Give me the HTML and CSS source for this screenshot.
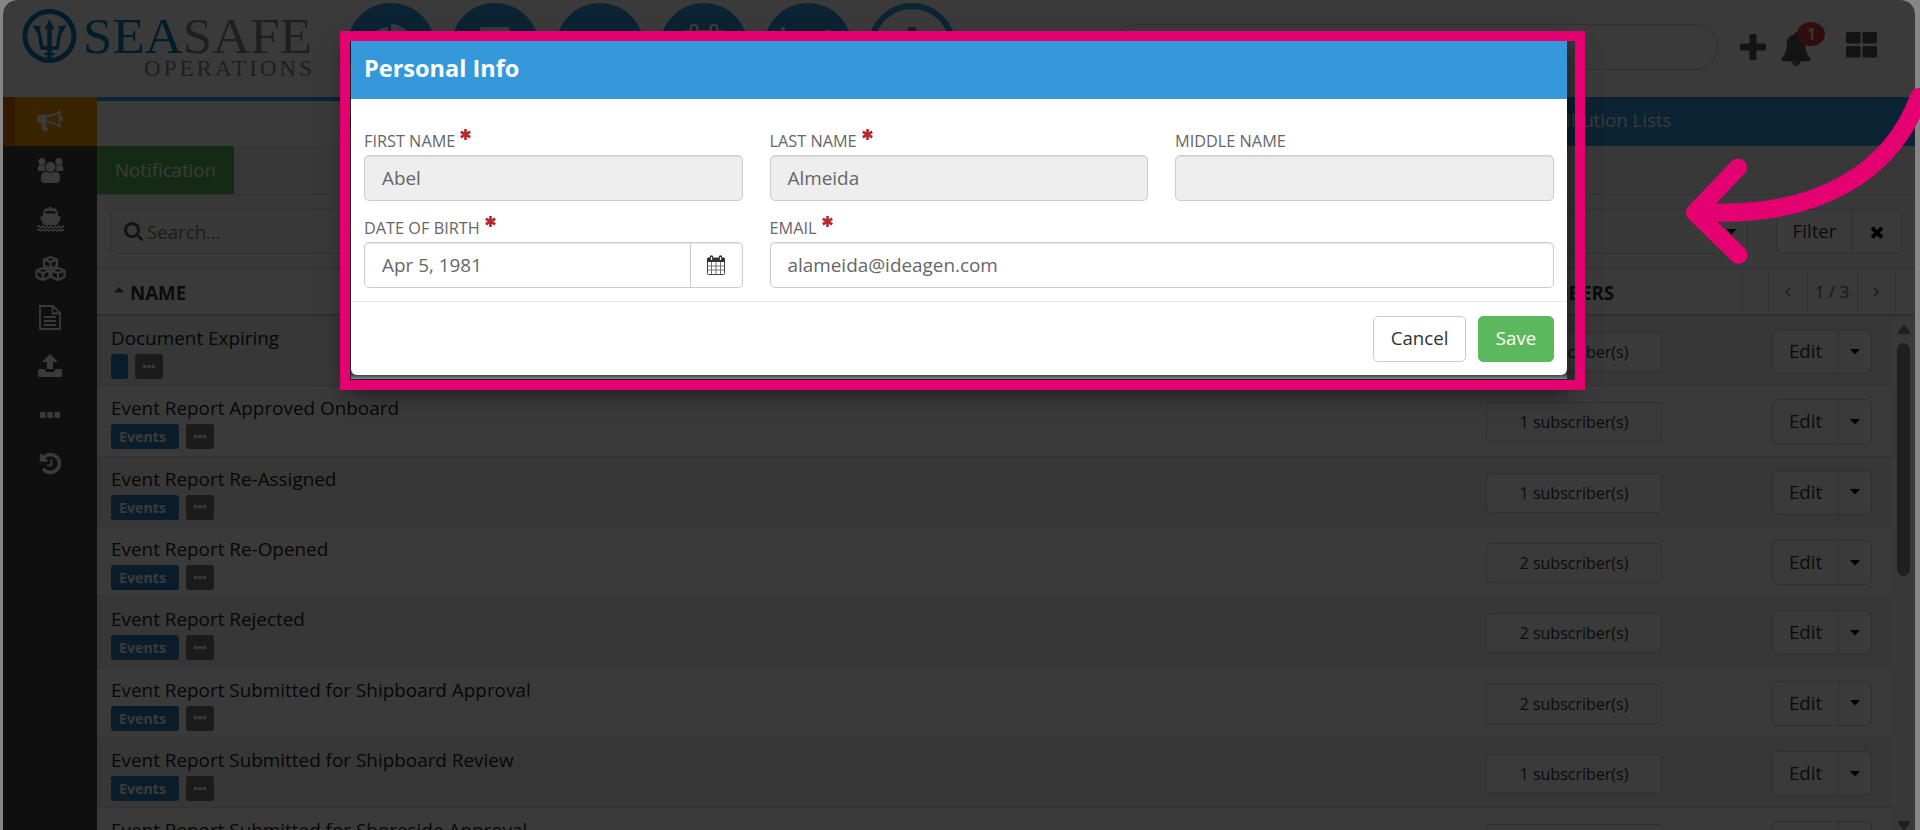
FILE: index.html
```
<!DOCTYPE html>
<html lang="en">
<head>
    <meta charset="UTF-8">
    <title>SeaSafe Operations</title>
    <link rel="stylesheet" href="styles.css">
</head>
<body>

    <svg class="defs" width="0" height="0">
        <symbol id="i-caret" viewBox="0 0 10 6"><path d="M0 0h10L5 5.6z"/></symbol>
        <symbol id="i-dots" viewBox="0 0 20 6"><rect x="0" y="0" width="5.6" height="6" rx="1"/><rect x="7.2" y="0" width="5.6" height="6" rx="1"/><rect x="14.4" y="0" width="5.6" height="6" rx="1"/></symbol>
        <symbol id="i-star" viewBox="0 0 10 10"><path d="M5 0v10M.700 2.500l8.600 5M9.300 2.500l-8.600 5" stroke="#b52b2b" stroke-width="2.400"/></symbol>
    </svg>

    <div class="app">
        <header class="topbar">
            <svg class="logo" width="312" height="97" viewBox="0 0 312 97">
                <g fill="none" stroke="#0a7fb8">
                    <circle cx="46.500" cy="36" r="24.500" stroke-width="5"/>
                    <path d="M46.500 26v34" stroke-width="4.500"/>
                    <path d="M34 28c4 7 3 14 5 20h15c2-6 1-13 5-20" stroke-width="3.500"/>
                    <path d="M41 54h11" stroke-width="2"/>
                </g>
                <path d="M46.500 19l5 10h-10zM29.500 25l9 1.500-5 6zM63.500 25l-9 1.500 5 6z" fill="#0a7fb8"/>
                <text class="logo-text" x="80" y="53" font-size="51" textLength="229" lengthAdjust="spacingAndGlyphs"><tspan fill="#0a7fb8">SEA</tspan><tspan fill="#8a8a8a">SAFE</tspan></text>
                <text class="logo-text" x="141" y="75.500" font-size="23" fill="#8a8a8a" textLength="168">OPERATIONS</text>
            </svg>
            <nav class="circles">
                <span class="circle"><svg width="46" height="46" viewBox="0 0 46 46"><path d="M20 3A20 20 0 1 0 40 26H20zM23 0v22h22A22 22 0 0 0 23 0z"/></svg></span>
                <span class="circle"><svg width="30" height="40" viewBox="0 0 30 40"><rect width="30" height="40" rx="3"/></svg></span>
                <span class="circle"><svg width="41" height="33" viewBox="0 0 41 33"><rect width="41" height="33" rx="3"/></svg></span>
                <span class="circle"><svg width="42" height="46" viewBox="0 0 42 46"><path d="M2 6h38v40H2z"/><path d="M11 4v6M31 4v6" stroke="#fff" stroke-width="9" stroke-linecap="round"/><path d="M11 4v6M31 4v6" stroke="#3498db" stroke-width="4" stroke-linecap="round"/></svg></span>
                <span class="circle"><svg width="54" height="40" viewBox="0 0 54 40"><path d="M2 0v38h52M9 30l9-10 8 6 20-18" fill="none" stroke="#fff" stroke-width="3.500"/><circle cx="46.500" cy="7.500" r="5"/></svg></span>
                <span class="circle outline"><svg width="40" height="40" viewBox="0 0 40 40"><path d="M16 1q0-1 1-1h6q1 0 1 1v15h16v8H24v16h-8V24H0v-8h16z"/></svg></span>
            </nav>
            <div class="global-search"></div>
            <div class="actions">
                <svg width="26" height="26" viewBox="0 0 26 26"><path d="M9.500 1.500q0-1.500 1.500-1.500h4q1.500 0 1.500 1.500v8h8q1.500 0 1.500 1.500v4q0 1.500-1.500 1.500h-8v8q0 1.500-1.500 1.500h-4q-1.500 0-1.500-1.500v-8h-8Q0 16.500 0 15v-4q0-1.500 1.500-1.500h8z"/></svg>
                <span class="bell">
                    <svg width="32" height="34" viewBox="0 0 1792 1792" preserveAspectRatio="none"><path d="M912 1696q0-16-16-16-59 0-101.500-42.500t-42.500-101.500q0-16-16-16t-16 16q0 73 51.500 124.500t124.500 51.500q16 0 16-16zm816-288q0 52-38 90t-90 38h-448q0 106-75 181t-181 75-181-75-75-181h-448q-52 0-90-38t-38-90q50-42 91-88t85-119.500 74.500-158.500 50-206 19.500-260q0-152 117-282.500t307-158.500q-8-19-8-39 0-40 28-68t68-28 68 28 28 68q0 20-8 39 190 28 307 158.500t117 282.500q0 139 19.500 260t50 206 74.500 158.500 85 119.500 91 88z"/></svg>
                    <span class="badge">1</span>
                </span>
                <svg width="31" height="26" viewBox="0 0 31 26"><rect width="14.500" height="11.500" rx="1.500"/><rect x="16.500" width="14.500" height="11.500" rx="1.500"/><rect y="14" width="14.500" height="11.500" rx="1.500"/><rect x="16.500" y="14" width="14.500" height="11.500" rx="1.500"/></svg>
            </div>
        </header>

        <div class="page">
            <aside class="sidebar">
                <a class="active"><svg width="26" height="22" viewBox="0 0 26 22"><path d="M2 5h8v8H9q0 4 3 6-2 3-6 1.500Q4 17 4.500 13H2q-2 0-2-2V7q0-2 2-2z"/><path d="M10.500 6Q17 5.500 22.500 1.500v15Q17 12.500 10.500 12" fill="none" stroke="#fff" stroke-width="2"/><path d="M23 6.500q3 .5 3 2.500t-3 2.500z"/></svg></a>
                <a><svg width="27" height="25" viewBox="0 0 27 25"><circle cx="5" cy="3.500" r="3.500"/><circle cx="22" cy="3.500" r="3.500"/><path d="M1 13q-1-6 2-6 3 1 5 0-1 3 0 6zM26 13q1-6-2-6-3 1-5 0 1 3 0 6z"/><circle cx="13.500" cy="9" r="5"/><path d="M4 22q-1-8 5-8.500 4.500 2.500 9 0 6 .5 5 8.500-.5 3-4 3H8q-3.500 0-4-3z"/></svg></a>
                <a><svg width="27" height="25" viewBox="0 0 27 25"><path d="M12 0h3v1.500h4l2 4.500v3l3 1q-1 4-4 8H7Q4 14 3 10l3-1V6l2-4.500h4zM9 4L8 6.500h11L18 4z"/><path d="M0 20l2-1 2 2 2-2 2 2 2-2 2 2 2-2 2 2 2-2 2 2 2-2 2 2 2-2 1 1M0 23.500l2-1 2 1.500 2-1.500 2 1.500 2-1.500 2 1.500 2-1.500 2 1.500 2-1.500 2 1.500 2-1.500 2 1.500 2-1.500 1 1" fill="none" stroke="#fff" stroke-width="1.500"/></svg></a>
                <a><svg width="31" height="25" viewBox="0 0 31 25"><g fill="none" stroke="#fff" stroke-width="2.200" stroke-linejoin="round"><path d="M9 3.500L15.500 1 22 3.500v6.500l-6.500 2.500L9 10zM9 3.500L15.500 6 22 3.500M15.500 6v6"/><path d="M1.500 14.500L8 12l6.500 2.500V21L8 24l-6.500-3zM1.500 14.500L8 17l6.500-2.500M8 17v6"/><path d="M16.500 14.500L23 12l6.500 2.500V21L23 24l-6.500-3zM16.500 14.500L23 17l6.500-2.500M23 17v6"/></g></svg></a>
                <a><svg width="22" height="25" viewBox="0 0 22 25"><path d="M1 1h13l7 7v16H1zM13.500 1v7.500H21M5 12h12M5 16h12M5 20h12" fill="none" stroke="#fff" stroke-width="1.800"/></svg></a>
                <a><svg width="24" height="23" viewBox="0 0 24 23"><path d="M12 0l8 8h-5v7H9V8H4zM1.500 15H7q0 3 2 3h6q2 0 2-3h5.500q1.500 0 1.500 1.500v5q0 1.500-1.500 1.500h-21Q0 23 0 21.500v-5Q0 15 1.500 15z"/></svg></a>
                <a><svg width="20" height="6"><use href="#i-dots"/></svg></a>
                <a><svg width="25" height="25" viewBox="0 0 1792 1792"><path d="M1664 896q0 156-61 298t-164 245-245 164-298 61q-172 0-327-72.500t-264-204.500q-7-10-6.500-22.500t8.500-20.500l137-138q10-9 25-9 16 2 23 12 73 95 179 147t225 52q104 0 198.500-40.500t163.500-109.500 109.500-163.500 40.500-198.500-40.500-198.500-109.500-163.500-163.500-109.500-198.500-40.500q-98 0-188 35.500t-160 101.500l137 138q31 30 14 69-17 40-59 40h-448q-26 0-45-19t-19-45v-448q0-42 40-59 39-17 69 14l130 129q107-101 244.500-156.500t284.500-55.500q156 0 298 61t245 164 164 245 61 298zm-640-288v448q0 14-9 23t-23 9h-320q-14 0-23-9t-9-23v-64q0-14 9-23t23-9h224v-352q0-14 9-23t23-9h64q14 0 23 9t9 23z"/></svg></a>
            </aside>

            <main class="content">
                <div class="tabs">
                    <a class="tab current">Notifications</a>
                    <a class="tab"></a>
                    <a class="tab last">Distribution Lists</a>
                </div>
                <div class="subtabs"><a>Notification</a></div>

                <div class="toolbar">
                    <div class="search">
                        <svg width="19" height="19" viewBox="0 0 1664 1664"><path d="M1152 704q0-185-131.500-316.500t-316.500-131.500-316.500 131.500-131.500 316.500 131.500 316.500 316.500 131.500 316.500-131.500 131.500-316.500zm512 832q0 52-38 90t-90 38q-54 0-90-38l-343-342q-179 124-399 124-143 0-273.500-55.500t-225-150-150-225-55.500-273.500 55.500-273.500 150-225 225-150 273.500-55.500 273.500 55.500 225 150 150 225 55.500 273.500q0 220-124 399l343 343q37 37 37 90z"/></svg>
                        Search...
                    </div>
                    <div class="select"><svg width="11" height="6"><use href="#i-caret"/></svg></div>
                    <div class="group filter">
                        <span>Filter</span>
                        <span class="clear"><svg width="18" height="18" viewBox="0 0 1792 1792"><path d="M1490 1322q0 40-28 68l-136 136q-28 28-68 28t-68-28l-294-294-294 294q-28 28-68 28t-68-28l-136-136q-28-28-28-68t28-68l294-294-294-294q-28-28-28-68t28-68l136-136q28-28 68-28t68 28l294 294 294-294q28-28 68-28t68 28l136 136q28 28 28 68t-28 68l-294 294 294 294q28 28 28 68z"/></svg></span>
                    </div>
                </div>

                <div class="thead">
                    <div class="name"><svg width="10" height="6" viewBox="0 0 10 6"><path d="M0 5.600h10L5 0z"/></svg> NAME</div>
                    <div class="subs">SUBSCRIBERS</div>
                    <div class="pager">
                        <span><svg width="7" height="10" viewBox="0 0 7 10"><path d="M6 1L2 5l4 4"/></svg></span>
                        <span class="count">1 / 3</span>
                        <span class="next"><svg width="7" height="10" viewBox="0 0 7 10"><path d="M1 1l4 4-4 4"/></svg></span>
                    </div>
                </div>

                <div class="list">
                    <div class="rows">
                        <div class="row">
                            <div class="name">Document Expiring<div class="tags"><b class="tag"></b><b class="tag more"><svg width="12" height="3.600"><use href="#i-dots"/></svg></b></div></div>
                            <div class="subs"><span>1 subscriber(s)</span></div>
                            <div class="group"><span>Edit</span><span class="drop"><svg width="10" height="6"><use href="#i-caret"/></svg></span></div>
                        </div>
                        <div class="row">
                            <div class="name">Event Report Approved Onboard<div class="tags"><b class="tag">Events</b><b class="tag more"><svg width="12" height="3.600"><use href="#i-dots"/></svg></b></div></div>
                            <div class="subs"><span>1 subscriber(s)</span></div>
                            <div class="group"><span>Edit</span><span class="drop"><svg width="10" height="6"><use href="#i-caret"/></svg></span></div>
                        </div>
                        <div class="row">
                            <div class="name">Event Report Re-Assigned<div class="tags"><b class="tag">Events</b><b class="tag more"><svg width="12" height="3.600"><use href="#i-dots"/></svg></b></div></div>
                            <div class="subs"><span>1 subscriber(s)</span></div>
                            <div class="group"><span>Edit</span><span class="drop"><svg width="10" height="6"><use href="#i-caret"/></svg></span></div>
                        </div>
                        <div class="row">
                            <div class="name">Event Report Re-Opened<div class="tags"><b class="tag">Events</b><b class="tag more"><svg width="12" height="3.600"><use href="#i-dots"/></svg></b></div></div>
                            <div class="subs"><span>2 subscriber(s)</span></div>
                            <div class="group"><span>Edit</span><span class="drop"><svg width="10" height="6"><use href="#i-caret"/></svg></span></div>
                        </div>
                        <div class="row">
                            <div class="name">Event Report Rejected<div class="tags"><b class="tag">Events</b><b class="tag more"><svg width="12" height="3.600"><use href="#i-dots"/></svg></b></div></div>
                            <div class="subs"><span>2 subscriber(s)</span></div>
                            <div class="group"><span>Edit</span><span class="drop"><svg width="10" height="6"><use href="#i-caret"/></svg></span></div>
                        </div>
                        <div class="row">
                            <div class="name">Event Report Submitted for Shipboard Approval<div class="tags"><b class="tag">Events</b><b class="tag more"><svg width="12" height="3.600"><use href="#i-dots"/></svg></b></div></div>
                            <div class="subs"><span>2 subscriber(s)</span></div>
                            <div class="group"><span>Edit</span><span class="drop"><svg width="10" height="6"><use href="#i-caret"/></svg></span></div>
                        </div>
                        <div class="row">
                            <div class="name">Event Report Submitted for Shipboard Review<div class="tags"><b class="tag">Events</b><b class="tag more"><svg width="12" height="3.600"><use href="#i-dots"/></svg></b></div></div>
                            <div class="subs"><span>1 subscriber(s)</span></div>
                            <div class="group"><span>Edit</span><span class="drop"><svg width="10" height="6"><use href="#i-caret"/></svg></span></div>
                        </div>
                        <div class="row">
                            <div class="name">Event Report Submitted for Shoreside Approval</div>
                            <div class="subs"><span></span></div>
                            <div class="group"><span></span><span class="drop"></span></div>
                        </div>
                    </div>
                    <div class="scrollbar">
                        <svg width="12" height="9" viewBox="0 0 12 9"><path d="M6 0q1 0 1.500 1L12 7.500q0 1.500-1 1.500H1Q0 9 0 7.500L4.500 1Q5 0 6 0z"/></svg>
                        <div class="thumb"></div>
                        <svg width="12" height="9" viewBox="0 0 12 9"><path d="M6 9q1 0 1.500-1L12 1.500Q12 0 11 0H1Q0 0 0 1.500L4.500 8q.5 1 1.500 1z"/></svg>
                    </div>
                </div>
            </main>
        </div>
        <div class="backdrop"></div>
    </div>

    <div class="highlight">
        <div class="modal">
            <h4>Personal Info</h4>
            <form class="fields">
                <div class="field">
                    <label>FIRST NAME <svg width="11" height="11"><use href="#i-star"/></svg></label>
                    <div class="input disabled">Abel</div>
                </div>
                <div class="field">
                    <label>LAST NAME <svg width="11" height="11"><use href="#i-star"/></svg></label>
                    <div class="input disabled">Almeida</div>
                </div>
                <div class="field">
                    <label>MIDDLE NAME</label>
                    <div class="input disabled"></div>
                </div>
                <div class="field">
                    <label>DATE OF BIRTH <svg width="11" height="11"><use href="#i-star"/></svg></label>
                    <div class="input date">
                        Apr 5, 1981
                        <span class="addon"><svg width="18" height="20" viewBox="0 0 18 20"><rect x=".5" y="3" width="17" height="16.500" rx="1" fill="#fff" stroke="#444"/><path d="M0 3h18v4H0z" fill="#333"/><path d="M4.500 7v12M9 7v12M13.500 7v12M1 11h16M1 15h16" stroke="#666" stroke-width=".9"/><path d="M4.500 2v3M13.500 2v3" stroke="#333" stroke-width="3.500" stroke-linecap="round"/><path d="M4.500 2v3M13.500 2v3" stroke="#fff" stroke-width="1.200"/></svg></span>
                    </div>
                </div>
                <div class="field wide">
                    <label>EMAIL <svg width="11" height="11"><use href="#i-star"/></svg></label>
                    <div class="input">alameida@ideagen.com</div>
                </div>
            </form>
            <div class="footer">
                <a class="btn">Cancel</a>
                <a class="btn save">Save</a>
            </div>
        </div>
    </div>

    <svg class="pointer" width="250" height="200" viewBox="1670 80 250 200">
        <path d="M1919 97C1893 168 1822 220 1696 212M1738 167.500L1695 212.500 1738.500 255"/>
    </svg>

</body>
</html>
```

FILE: styles.css
```
* {
    box-sizing: border-box;
}

body {
    margin: 0;
    height: 830px;
    overflow: hidden;
    position: relative;
    background: #868686;
    color: #333;
    font-family: "Open Sans", "Noto Sans", sans-serif;
    font-size: 18.67px;
}

svg {
    display: block;
    flex: none;
}

.defs {
    position: absolute;
}

.app {
    position: relative;
    height: 830px;
    margin: 0 5px 0 3px;
    border-radius: 14px 14px 0 0;
    overflow: hidden;
    background: #fff;
}

.backdrop {
    position: absolute;
    inset: 0;
    background: rgba(0, 0, 0, 0.773);
}

/* top bar */
.topbar {
    display: flex;
    height: 97px;
}

.logo-text {
    font-family: "Liberation Serif", serif;
}

.circles {
    display: flex;
    gap: 16.3px;
    margin: 3px 0 0 32px;
}

.circle {
    width: 88px;
    height: 88px;
    border-radius: 50%;
    background: #3498db;
    fill: #fff;
    display: flex;
    align-items: center;
    justify-content: center;
}

.circle.outline {
    background: none;
    border: 6px solid #3498db;
    fill: #3498db;
}

.global-search {
    width: 604px;
    height: 46px;
    margin: 24px 0 0 158px;
    border: 1px solid #ccc;
    border-radius: 23px;
}

.actions {
    display: flex;
    align-items: flex-start;
    margin: 32px 0 0 22px;
    gap: 14px;
    fill: #555;
}

.actions > svg:first-child {
    margin-top: 2px;
}

.bell {
    position: relative;
    margin-right: 20px;
}

.badge {
    position: absolute;
    left: 17px;
    top: -10px;
    width: 28px;
    height: 24px;
    border-radius: 50%;
    background: #d43f3a;
    color: #fff;
    font-size: 16px;
    font-weight: 600;
    line-height: 24px;
    text-align: center;
}

.page {
    display: flex;
    height: 733px;
}

/* sidebar */
.sidebar {
    width: 94px;
    background: #444;
    fill: #fff;
}

.sidebar a {
    height: 48.9px;
    display: flex;
    align-items: center;
    justify-content: center;
}

.sidebar .active {
    background: #f8a000;
    border-left: 12px solid #e07000;
    padding-right: 12px;
}

.content {
    flex: 1;
}

.tabs {
    display: grid;
    grid-template-columns: repeat(3, 1fr);
    height: 49px;
    background: #3498db;
}

.tab {
    color: #fff;
    line-height: 46px;
    text-align: center;
}

.tab.current {
    background: #fff;
    color: #333;
    border-top: 4px solid #3498db;
    line-height: 42px;
    padding-right: 12px;
}

.tab.last {
    padding-right: 28px;
}

.subtabs {
    height: 49px;
    background: #f5f5f5;
    border-bottom: 1px solid #ddd;
}

.subtabs a {
    display: inline-block;
    width: 137px;
    height: 48px;
    background: #5cb85c;
    color: #fff;
    line-height: 48px;
    text-align: center;
}

/* toolbar */
.toolbar {
    display: flex;
    height: 74px;
    padding: 14px 13px 0 14px;
    background: #fafafa;
    border-bottom: 1px solid #ccc;
}

.search,
.select {
    height: 45px;
    border: 1px solid #ccc;
    border-radius: 5px;
    display: flex;
    align-items: center;
}

.search {
    width: 900px;
    padding-left: 12px;
    gap: 4px;
    color: #777;
    fill: #555;
}

.select {
    flex: 1;
    margin-left: 15px;
    justify-content: flex-end;
    padding-right: 10px;
}

.group {
    display: flex;
    width: 100px;
    height: 45px;
    border: 1px solid #ccc;
    border-radius: 6px;
    background: #fff;
    line-height: 41px;
    text-align: center;
}

.group > span {
    flex: 1;
}

.group .drop,
.group .clear {
    flex: none;
    width: 33px;
    border-left: 1px solid #ccc;
    display: flex;
    align-items: center;
    justify-content: center;
}

.group.filter {
    width: 126px;
    margin-left: 28px;
}

.group .clear {
    width: 49px;
}

/* table */
.thead {
    display: flex;
    height: 47px;
    border-bottom: 2px solid #ccc;
    font-weight: 700;
    line-height: 48px;
}

.thead .name {
    width: 1394px;
    padding-left: 17px;
    display: flex;
    gap: 6px;
}

.thead .name svg {
    margin-top: 18px;
    fill: #555;
}

.thead .subs {
    width: 252px;
    border-right: 1px solid #eee;
}

.pager {
    display: flex;
    width: 128px;
    height: 38px;
    margin: 4px 0 0 25px;
    border: solid #ddd;
    border-width: 0 1px;
    font-size: 17px;
    font-weight: 400;
    line-height: 36px;
    color: #666;
}

.pager span {
    flex: 1;
    display: flex;
    align-items: center;
    justify-content: center;
}

.pager svg {
    fill: none;
    stroke: #888;
    stroke-width: 1.5;
}

.pager .next svg {
    stroke: #337ab7;
}

.pager .count {
    flex: none;
    width: 51px;
    border: solid #ddd;
    border-width: 0 1px;
}

.list {
    display: flex;
    height: 514px;
}

.rows {
    flex: 1;
    overflow: hidden;
}

.row {
    display: flex;
    height: 70.35px;
    border-bottom: 1px solid #ddd;
}

.row:nth-child(odd) {
    background: #efefef;
}

.row .name {
    width: 1389px;
    padding: 9px 0 0 14px;
    color: #222;
    font-size: 18.9px;
    line-height: 26px;
}

.tags {
    display: flex;
    gap: 7px;
    margin-top: 3px;
}

.tag {
    min-width: 17px;
    height: 25px;
    padding: 0 8px;
    border-radius: 3px;
    background: #337ab7;
    color: #fff;
    font-size: 14.2px;
    line-height: 25px;
}

.tag:not(:empty):not(.more) {
    width: 68px;
    padding-right: 0;
}

.tag.more {
    background: #777;
    fill: #fff;
    display: flex;
    align-items: center;
}

.row .subs {
    width: 286px;
    padding-top: 16px;
}

.row .subs span {
    display: block;
    width: 176px;
    height: 40px;
    border: 1px solid #ccc;
    border-radius: 4px;
    background: #fff;
    font-size: 16px;
    line-height: 38px;
    text-align: center;
}

.row .group {
    margin-top: 13px;
}

.scrollbar {
    width: 23px;
    padding-top: 9px;
    background: #fafafa;
    fill: #888;
    display: flex;
    flex-direction: column;
    align-items: center;
}

.thumb {
    width: 13px;
    height: 238px;
    margin: 9px 0 245px;
    border-radius: 7px;
    background: #888;
}

/* modal with the highlight frame around it */
.highlight {
    position: absolute;
    left: 351px;
    top: 41px;
    width: 1216px;
    height: 338px;
    background: linear-gradient(#444 334px, #888);
    box-shadow: 0 10px 22px 4px rgba(0, 0, 0, 0.55);
}

.highlight::after {
    content: "";
    position: absolute;
    inset: -10px -18px -11px -11px;
    border: 10px solid #e50072;
}

.modal {
    height: 334px;
    background: #fff;
    border-radius: 0 0 6px 6px;
}

.modal h4 {
    margin: 0;
    height: 58px;
    padding-left: 13px;
    background: #3498db;
    color: #fff;
    font-size: 23.5px;
    line-height: 55px;
    font-weight: 700;
}

.fields {
    display: grid;
    grid-template-columns: repeat(3, 378.500px);
    gap: 15px 27px;
    height: 203px;
    padding: 30px 13px 0;
    align-content: start;
    border-bottom: 1px solid #e5e5e5;
}

.field.wide {
    grid-column: span 2;
}

.field label {
    display: flex;
    gap: 5px;
    height: 26px;
    color: #666;
    font-size: 16.3px;
    line-height: 25px;
}

.input {
    display: flex;
    height: 46px;
    padding-left: 17px;
    border: 1px solid #ccc;
    border-radius: 5px;
    box-shadow: inset 0 1px 1px rgba(0, 0, 0, 0.08);
    color: #666;
    font-size: 18.9px;
    line-height: 44px;
}

.input.disabled {
    background: #eee;
}

.input.date {
    justify-content: space-between;
}

.addon {
    width: 52px;
    border-left: 1px solid #ccc;
    display: flex;
    align-items: center;
    justify-content: center;
}

.footer {
    display: flex;
    justify-content: flex-end;
    gap: 12px;
    padding: 14px 13px 0;
}

.btn {
    width: 93px;
    height: 46px;
    border: 1px solid #ccc;
    border-radius: 5px;
    line-height: 41px;
    text-align: center;
}

.btn.save {
    width: 76px;
    background: #5cb85c;
    border-color: #5cb85c;
    color: #fff;
}

.pointer {
    position: absolute;
    left: 1670px;
    top: 80px;
    fill: none;
    stroke: #e50072;
    stroke-width: 18;
    stroke-linecap: round;
    stroke-linejoin: round;
}
```
